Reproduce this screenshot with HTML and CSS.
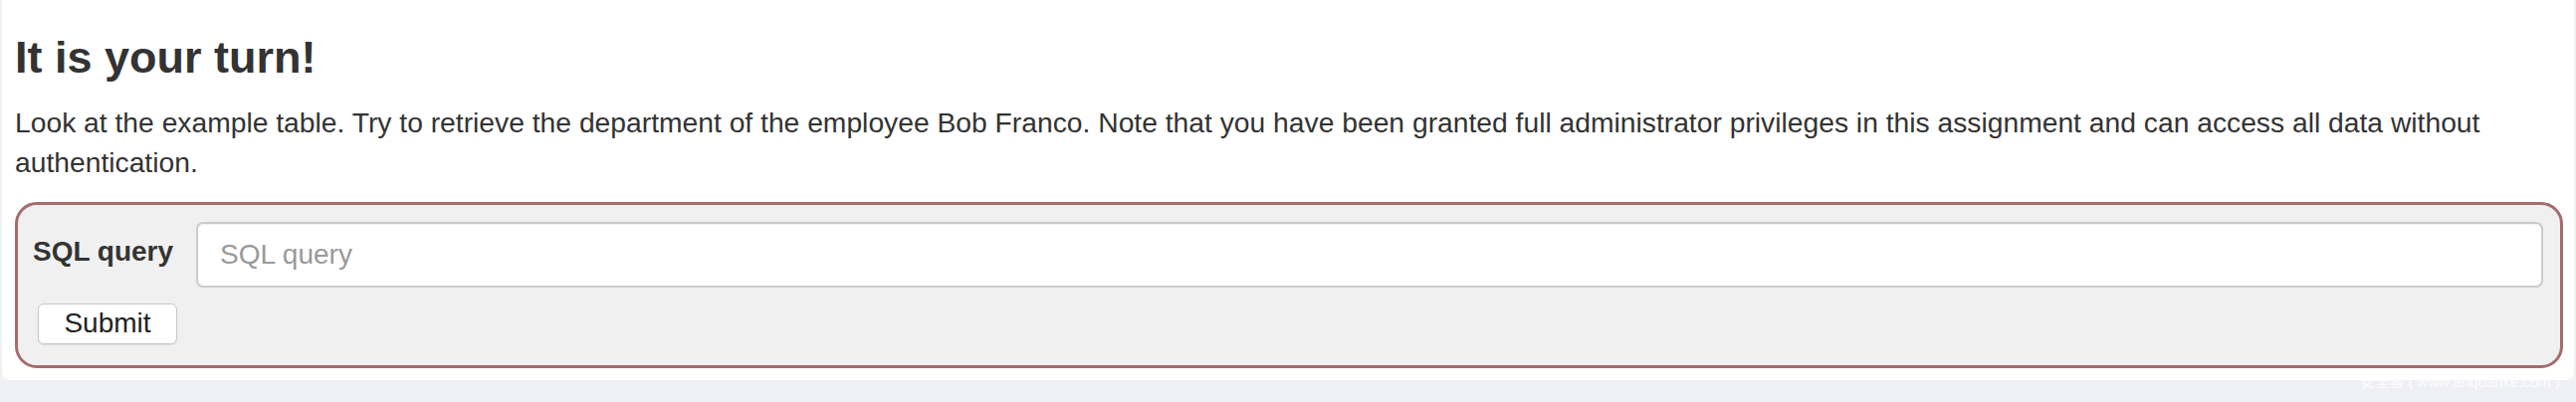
FILE: index.html
```html
<!DOCTYPE html>
<html lang="en">
<head>
<meta charset="utf-8">
<title>It is your turn!</title>
<link rel="stylesheet" href="styles.css">
</head>
<body>
<div class="page">
  <div class="card">
    <h3 class="title">It is your turn!</h3>
    <p class="intro">Look at the example table. Try to retrieve the department of the employee Bob Franco. Note that you have been granted full administrator privileges in this assignment and can access all data without authentication.</p>
    <form class="attack-form">
      <div class="query-row">
        <label class="query-label" for="query">SQL query</label>
        <input class="query-input" id="query" type="text" placeholder="SQL query">
      </div>
      <button class="submit-btn" type="button">Submit</button>
    </form>
  </div>
  <div class="watermark">安全客 ( www.anquanke.com )</div>
</div>
</body>
</html>
```

FILE: styles.css
```css
html, body {
  margin: 0;
  padding: 0;
  background: #eff0f5;
}
body {
  font-family: "Liberation Sans", Arial, Helvetica, sans-serif;
  color: #333;
  font-size: 28px;
  line-height: 40px;
}
.page {
  position: relative;
  height: 404px;
  padding: 0 2px;
  box-sizing: border-box;
  overflow: hidden;
}
.card {
  background: #fff;
  height: 382px;
  border-radius: 0 0 8px 8px;
  padding: 1px 11px 0 13px;
  box-sizing: border-box;
}
.title {
  font-size: 45px;
  line-height: 1.1;
  font-weight: 700;
  margin: 32px 0 20px 0;
  color: #333;
}
.intro {
  margin: 0 0 20px 0;
  font-size: 28.25px;
}
.attack-form {
  background: #f0f0f0;
  border: 3px solid #a56c6c;
  border-radius: 22px;
  padding: 17px 17px 21px 15px;
  display: flex;
  flex-direction: column;
  align-items: flex-start;
  gap: 16px;
}
.query-row {
  display: flex;
  align-items: center;
  width: 100%;
  gap: 23px;
}
.query-label {
  font-weight: 700;
  white-space: nowrap;
  margin-top: -5px;
}
.query-input {
  flex: 1;
  height: 66px;
  box-sizing: border-box;
  border: 2px solid #cbcbcb;
  border-radius: 7px;
  background: #fff;
  padding: 0 22px;
  font-family: "Liberation Sans", Arial, Helvetica, sans-serif;
  font-size: 28px;
  color: #333;
  box-shadow: inset 0 1px 2px rgba(0, 0, 0, 0.06);
  outline: none;
}
.query-input::placeholder {
  color: #999;
}
.submit-btn {
  margin-left: 5px;
  height: 41px;
  width: 140px;
  box-sizing: border-box;
  background: #fff;
  border: 1px solid #c8c8c8;
  border-radius: 6px;
  font-family: "Liberation Sans", Arial, Helvetica, sans-serif;
  font-size: 28px;
  line-height: 1;
  color: #222;
  padding: 0;
  box-shadow: 0 1px 1px rgba(0, 0, 0, 0.08);
}
.watermark {
  position: absolute;
  right: 16px;
  top: 374px;
  font-family: "Liberation Sans", "Noto Sans CJK SC", sans-serif;
  font-size: 15px;
  line-height: 20px;
  color: rgba(255, 255, 255, 0.85);
  white-space: nowrap;
}
```
